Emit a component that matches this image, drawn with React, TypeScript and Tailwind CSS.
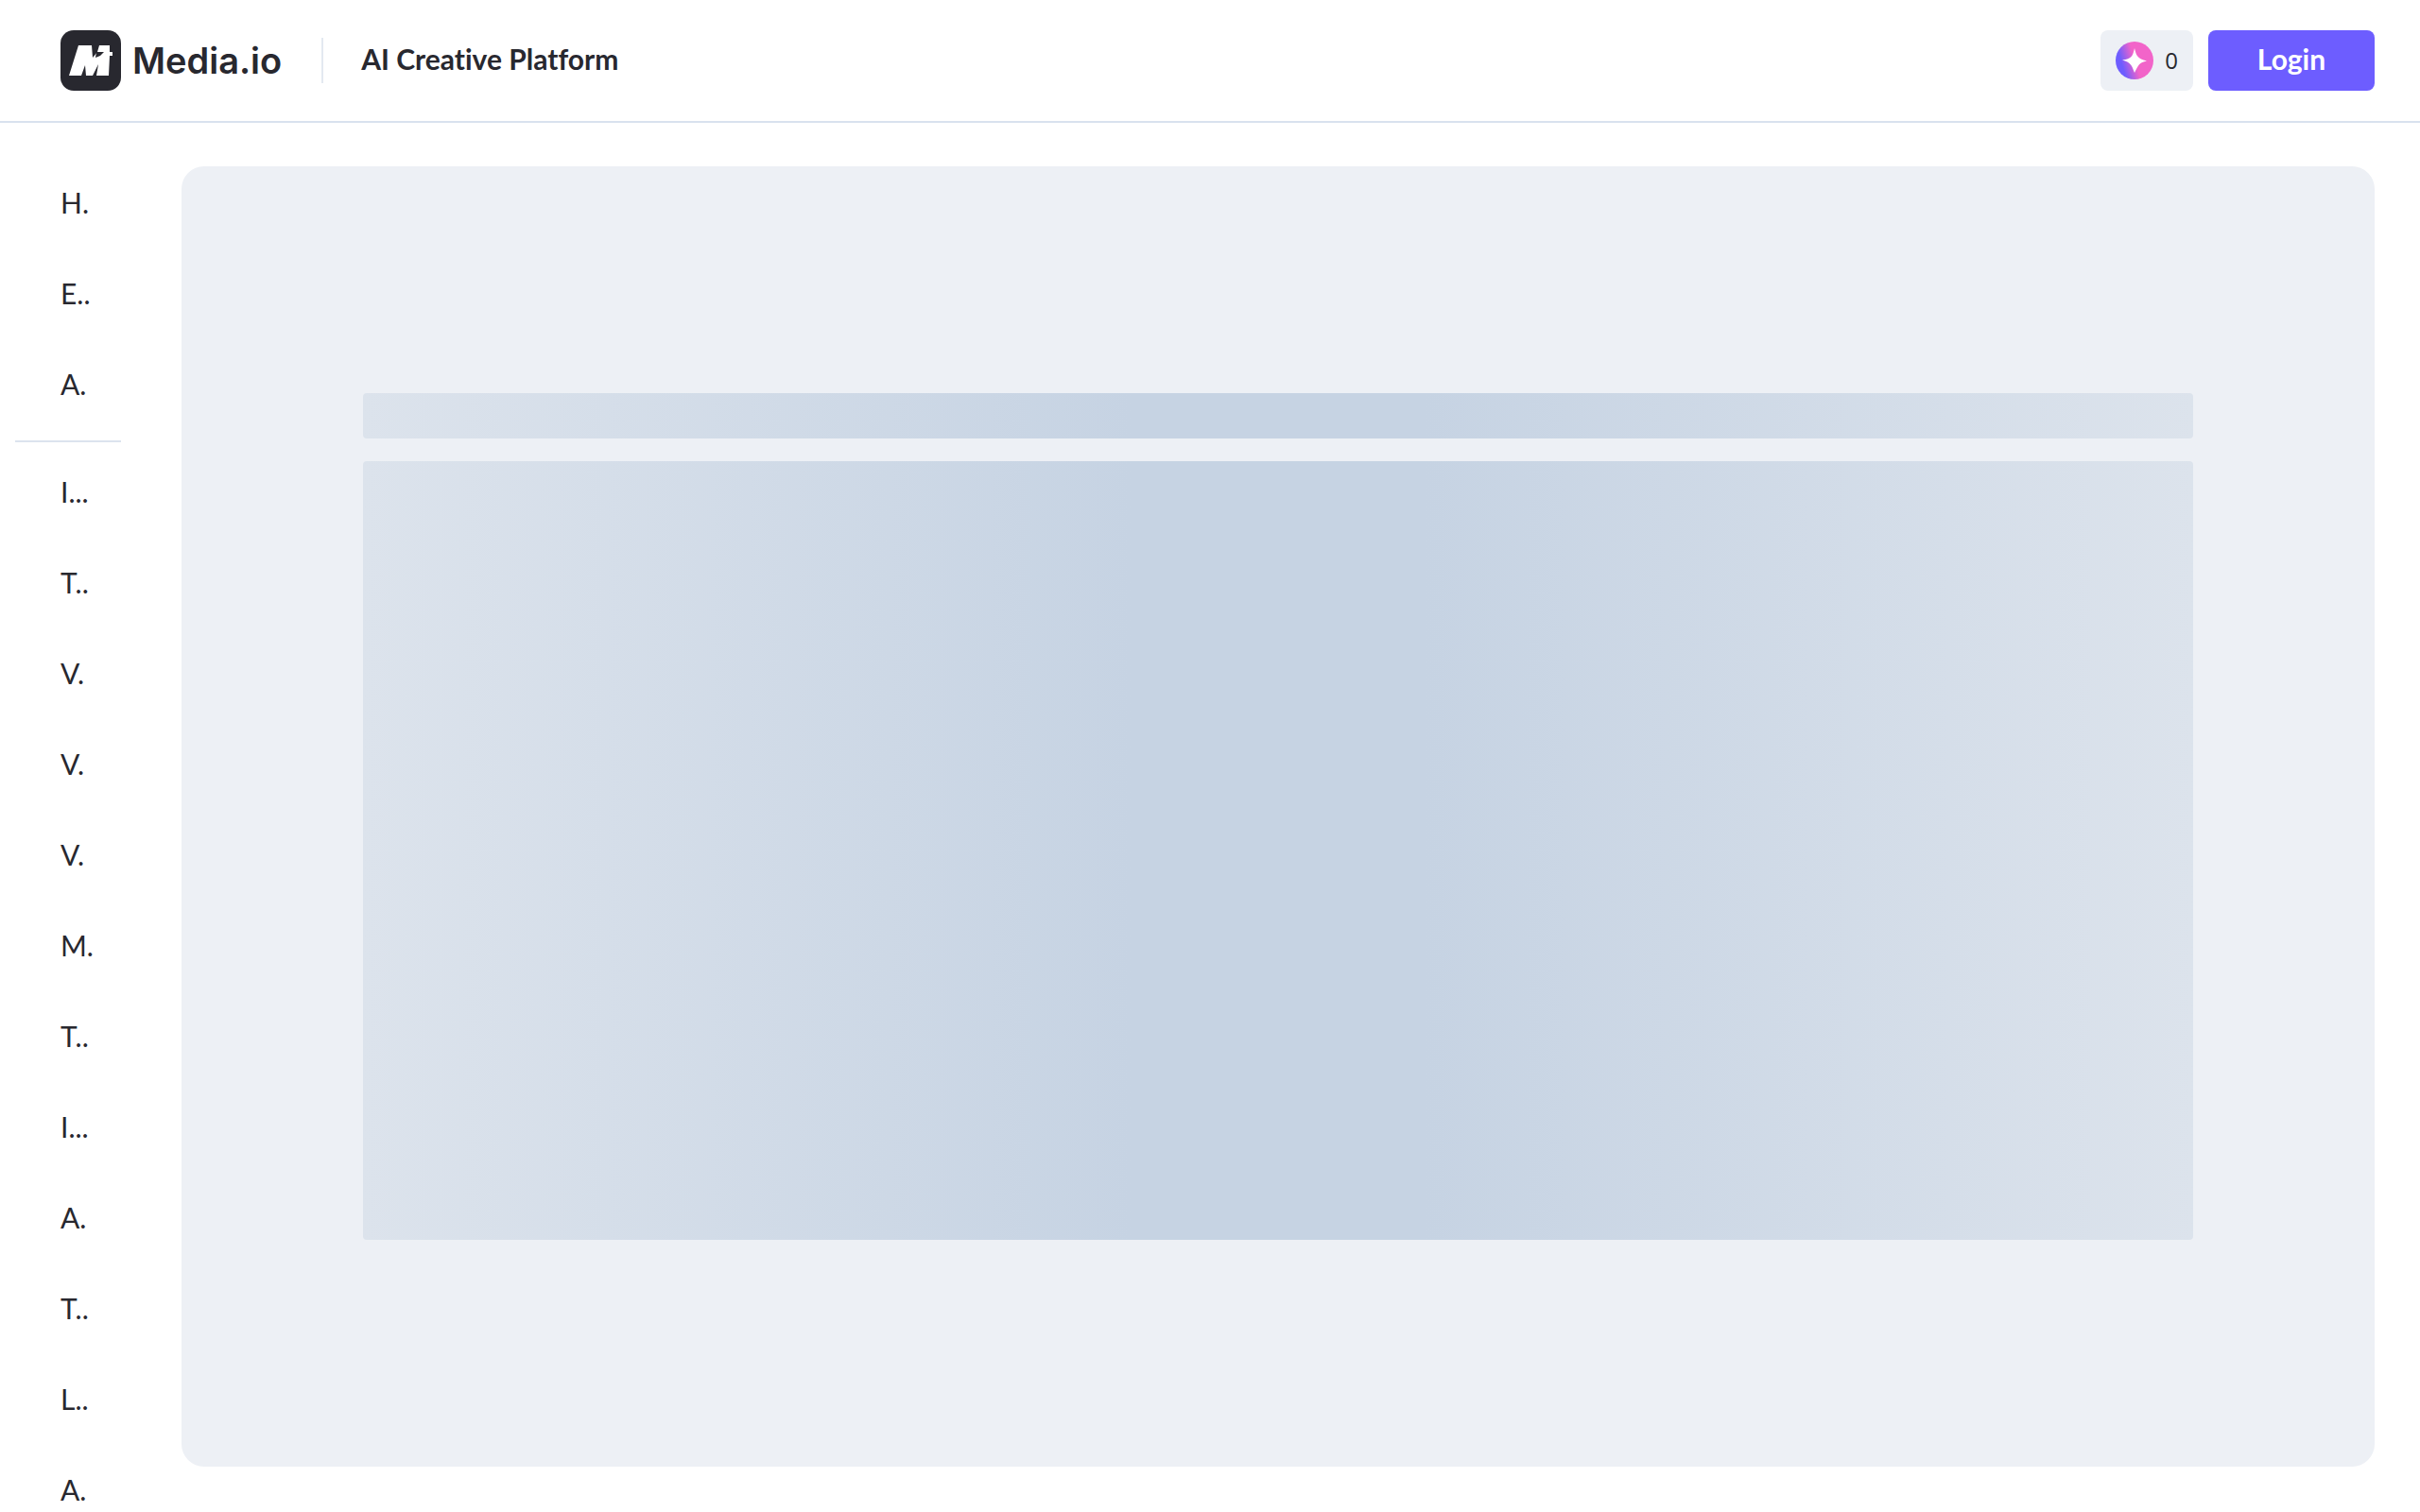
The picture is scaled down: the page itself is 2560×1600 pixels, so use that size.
const primaryItems = ['H.', 'E..', 'A.'];

const toolItems = ['I...', 'T..', 'V.', 'V.', 'V.', 'M.', 'T..', 'I...', 'A.', 'T..', 'L..', 'A.'];

function LogoMark() {
    return (
        <svg viewBox="0 0 64 64" className="size-16" aria-hidden="true">
            <rect width="64" height="64" rx="14" fill="#28282f" />
            <path
                d="M19 16H33L34 29L39 23L41 16H52V23H55V27H52L51 48H38L40 36L34 48H27L26 37L22 48H9Z"
                fill="#fff"
            />
            <path d="M38 23H46L42 27L37 29Z" fill="#28282f" />
        </svg>
    );
}

function CreditIcon() {
    return (
        <svg viewBox="0 0 40 40" className="size-10" aria-hidden="true">
            <defs>
                <linearGradient id="credit" x1="0" y1="0.6" x2="1" y2="0.3">
                    <stop offset="0.15" stopColor="#6d5dff" />
                    <stop offset="0.5" stopColor="#f264c9" />
                </linearGradient>
            </defs>
            <circle cx="20" cy="20" r="20" fill="url(#credit)" />
            <path
                d="M20 7C22 15 23 18 33 20.500C25 22 24 25 20 33C17 25 16 22 7 19.500C17 18 18 16 20 7Z"
                fill="#fff"
            />
        </svg>
    );
}

function NavList({ items }: { items: string[] }) {
    return (
        <ul>
            {items.map((item, index) => (
                <li key={index}>
                    <a href="#" className="flex h-24 items-center pl-12 whitespace-nowrap">
                        {item}
                    </a>
                </li>
            ))}
        </ul>
    );
}

export default function App() {
    return (
        <div className="flex h-screen flex-col overflow-hidden bg-white font-['Lato',sans-serif] text-[30px] leading-9 text-[#28282f] [font-variant-ligatures:none]">
            <header className="flex shrink-0 items-center justify-between border-b-2 border-[#d9e2ee] py-8 pr-12 pl-16">
                <div className="flex items-center gap-10">
                    <a href="#" className="flex items-center gap-3 pr-0.5">
                        <LogoMark />
                        <span className="font-['Inter',sans-serif] text-[38px] leading-[48px] font-semibold">Media.io</span>
                    </a>
                    <div className="h-12 w-0.5 bg-[#e3e9f1]"></div>
                    <h1 className="pb-1 font-bold">AI Creative Platform</h1>
                </div>
                <div className="flex items-center gap-4">
                    <button className="flex h-16 items-center gap-3 rounded-lg bg-[#edf0f5] px-4 font-['Open_Sans',sans-serif] text-2xl">
                        <CreditIcon />
                        <span>0</span>
                    </button>
                    <button className="h-16 w-44 rounded-lg bg-[#6d5dff] pb-1 font-bold text-white">Login</button>
                </div>
            </header>

            <div className="flex min-h-0 flex-1">
                <nav className="w-36 shrink-0 overflow-hidden px-4 pt-9">
                    <NavList items={primaryItems} />
                    <hr className="mt-3 mb-1 h-0.5 border-0 bg-[#dce3ee]" />
                    <NavList items={toolItems} />
                </nav>
                <main className="flex min-w-0 flex-1 pt-[46px] pr-12 pb-12 pl-12">
                    <div className="flex flex-1 flex-col gap-6 rounded-3xl bg-[#edf0f5] px-48 py-60">
                        <div className="h-12 rounded bg-[linear-gradient(90deg,#dce3ec,#c6d3e3_42%,#c6d3e3_58%,#dce3ec)]"></div>
                        <div className="flex-1 rounded bg-[linear-gradient(90deg,#dce3ec,#c6d3e3_42%,#c6d3e3_58%,#dce3ec)]"></div>
                    </div>
                </main>
            </div>
        </div>
    );
}
